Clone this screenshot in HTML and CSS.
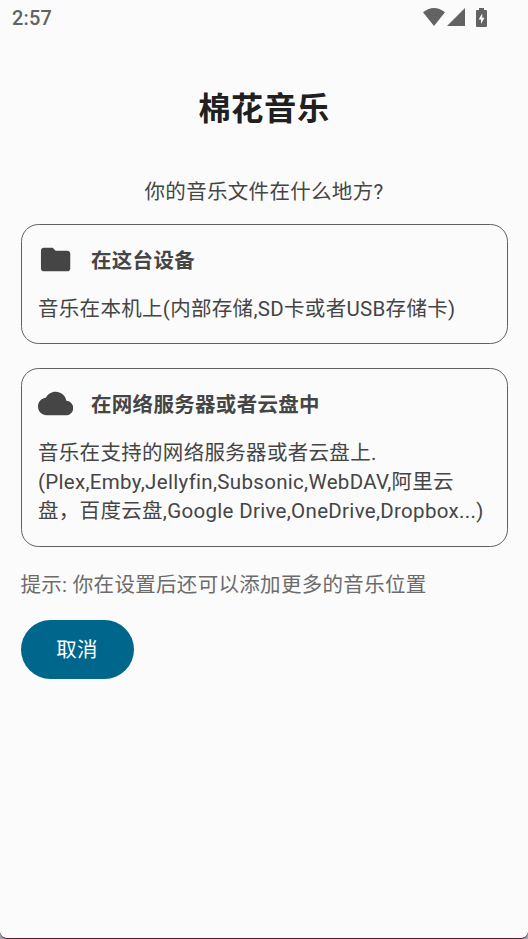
FILE: index.html
```html
<!DOCTYPE html>
<html lang="zh-CN">
<head>
<meta charset="utf-8">
<title>棉花音乐</title>
<link rel="stylesheet" href="styles.css">
</head>
<body>
<div class="screen">
  <header class="status">
    <span class="clock">2:57</span>
    <div class="indicators">
      <svg class="wifi" viewBox="0 0 22 18"><path d="M0 4.300Q11-4.300 22 4.300L11 18Z"/></svg>
      <svg class="signal" viewBox="0 0 18 18"><path d="M18 0V18H0Z"/></svg>
      <svg class="battery" viewBox="0 0 11 19"><path fill-rule="evenodd" d="M3 0H8V2H10Q11 2 11 3V18Q11 19 10 19H1Q0 19 0 18V3Q0 2 1 2H3ZM6.200 5.500L2.600 11.600H5V16L8.500 9.800H6.200Z"/></svg>
    </div>
  </header>
  <main class="content">
    <h1 class="title">棉花音乐</h1>
    <p class="question">你的音乐文件在什么地方?</p>
    <section class="card card-local">
      <div class="card-head">
        <svg class="icon" viewBox="0 0 24 24"><path d="M10 4H4c-1.100 0-1.990.9-1.990 2L2 18c0 1.100.9 2 2 2h16c1.100 0 2-.9 2-2V8c0-1.100-.9-2-2-2h-8l-2-2z"/></svg>
        <h2 class="card-title">在这台设备</h2>
      </div>
      <p class="card-text">音乐在本机上(内部存储,SD卡或者USB存储卡)</p>
    </section>
    <section class="card card-cloud">
      <div class="card-head">
        <svg class="icon" viewBox="0 0 24 24"><path d="M19.350 10.040C18.670 6.590 15.640 4 12 4 9.110 4 6.600 5.640 5.350 8.040 2.340 8.360 0 10.910 0 14c0 3.310 2.690 6 6 6h13c2.760 0 5-2.240 5-5 0-2.640-2.050-4.780-4.650-4.960z"/></svg>
        <h2 class="card-title">在网络服务器或者云盘中</h2>
      </div>
      <p class="card-text">音乐在支持的网络服务器或者云盘上.<br>(Plex,Emby,Jellyfin,Subsonic,WebDAV,阿里云<br>盘，百度云盘,Google Drive,OneDrive,Dropbox...)</p>
    </section>
    <p class="hint">提示: 你在设置后还可以添加更多的音乐位置</p>
    <button class="cancel" type="button">取消</button>
  </main>
</div>
</body>
</html>
```

FILE: styles.css
```css
* { box-sizing: border-box; }

body {
  margin: 0;
  background: #a79fae;
  font-family: Roboto, "Noto Sans CJK SC", sans-serif;
}

h1, h2, p { margin: 0; }

.screen {
  height: 939px;
  overflow: hidden;
  background: #fbfbfb;
  border-bottom: 1px solid #4b1b2c;
  border-radius: 0 0 7px 7px;
}

.status {
  display: flex;
  justify-content: space-between;
  align-items: center;
  height: 36px;
  padding: 0 41px 0 12px;
  color: #636363;
}

.clock {
  font-size: 20px;
  font-weight: 500;
  line-height: 36px;
  letter-spacing: 0.200px;
}

.indicators {
  display: flex;
  align-items: center;
  padding-bottom: 2px;
  fill: #636363;
}

.wifi { width: 22px; height: 18px; }
.signal { width: 18px; height: 18px; margin-left: 2px; }
.battery { width: 11px; height: 19px; margin-left: 11px; }

.content {
  display: flex;
  flex-direction: column;
  padding: 49px 20.500px 0;
  font-size: 20.500px;
  line-height: 29.300px;
  letter-spacing: 0.310px;
  color: #454545;
}

.title {
  font-size: 32.300px;
  line-height: 48px;
  letter-spacing: 0.600px;
  text-align: center;
  color: #202020;
}

.question {
  margin-top: 45px;
  text-align: center;
}

.card {
  border: 1px solid #606060;
  border-radius: 17.500px;
  padding: 17px 0 0 16px;
}

.card-local {
  height: 120.500px;
  margin-top: 16.500px;
}

.card-cloud {
  height: 179px;
  margin-top: 23.500px;
}

.card-head {
  display: flex;
  align-items: center;
  gap: 18.300px;
  height: 36px;
}

.icon {
  width: 35.200px;
  height: 35.200px;
  fill: #454545;
}

.card-title {
  padding-top: 4px;
  font-size: 20.500px;
  line-height: 29.300px;
}

.card-text {
  margin: 17px 0 0 0.500px;
  white-space: nowrap;
}

.hint {
  margin-top: 24px;
  color: #6b6b6b;
}

.cancel {
  align-self: flex-start;
  width: 113px;
  height: 59px;
  margin-top: 20px;
  padding: 2px 0 0;
  border: 0;
  border-radius: 29.500px;
  background: #00668b;
  color: #fff;
  font: inherit;
  letter-spacing: inherit;
}
```
